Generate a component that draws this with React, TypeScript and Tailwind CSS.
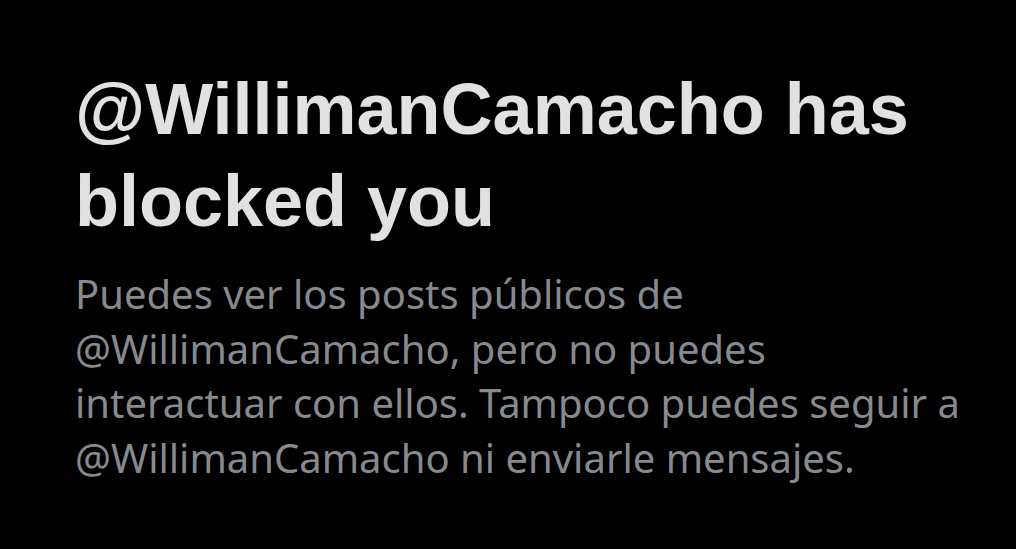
export default function App() {
  return (
    <div className="w-[1016px] h-[549px] bg-black overflow-hidden">
      <div className="pl-[75px] pt-[63px] w-[1000px]">
        <h1 className="font-['Liberation_Sans',Arial,sans-serif] font-bold text-[72px] leading-[92px] text-[#e1e1e1]">
          @WillimanCamacho has blocked you
        </h1>
        <p className="mt-[20px] font-['Noto_Sans',sans-serif] text-[40px] leading-[54.5px] text-[#868a8f] w-[920px]">
          Puedes ver los posts públicos de
          <br />
          @WillimanCamacho, pero no puedes
          <br />
          interactuar con ellos. Tampoco puedes seguir a
          <br />
          @WillimanCamacho ni enviarle mensajes.
        </p>
      </div>
    </div>
  );
}
